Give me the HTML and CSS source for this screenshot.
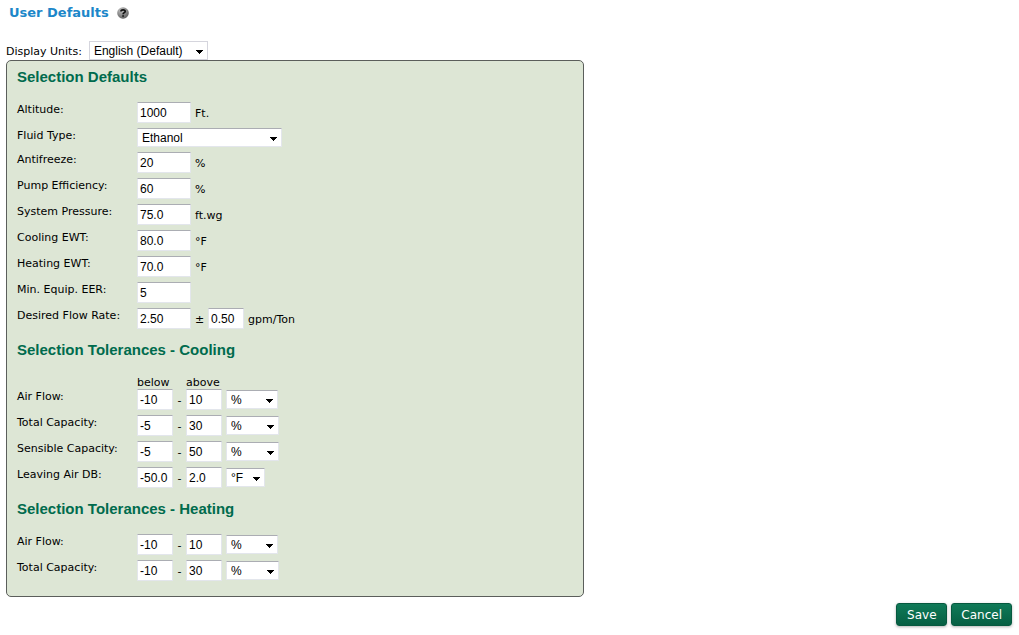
FILE: index.html
```html
<!DOCTYPE html>
<html lang="en">
<head>
<meta charset="utf-8">
<title>User Defaults</title>
<link rel="stylesheet" href="styles.css">
</head>
<body>
<header class="page-header">
  <h1 class="page-title">User Defaults</h1>
  <svg class="help-icon" viewBox="0 0 12 12" role="img" aria-label="Help">
    <defs><radialGradient id="ball" cx="35%" cy="25%" r="80%"><stop offset="0" stop-color="#c0c0c0"/><stop offset="1" stop-color="#5c5c5c"/></radialGradient></defs>
    <circle cx="6" cy="6" r="5.8" fill="url(#ball)"/>
    <path d="M4 4.4C4 2.5 8.2 2.3 8.2 4.4C8.2 5.7 6.1 5.6 6.1 7.2M6.1 8.3V9.8" fill="none" stroke="#111" stroke-width="1.7"/>
  </svg>
</header>
<form class="defaults-form">
  <div class="units-bar">
    <label for="units">Display Units:</label>
    <select id="units" class="select select-units"><option>English (Default)</option></select>
  </div>
  <div class="panel">
    <section class="group">
      <h2 class="group-title">Selection Defaults</h2>
      <div class="row"><label class="name" for="altitude">Altitude:</label><div class="fields"><input id="altitude" class="box" value="1000"><span>Ft.</span></div></div>
      <div class="row row-select"><label class="name" for="fluid">Fluid Type:</label><div class="fields"><select id="fluid" class="select select-fluid"><option>Ethanol</option></select></div></div>
      <div class="row"><label class="name" for="antifreeze">Antifreeze:</label><div class="fields"><input id="antifreeze" class="box" value="20"><span>%</span></div></div>
      <div class="row"><label class="name" for="pump">Pump Efficiency:</label><div class="fields"><input id="pump" class="box" value="60"><span>%</span></div></div>
      <div class="row"><label class="name" for="pressure">System Pressure:</label><div class="fields"><input id="pressure" class="box" value="75.0"><span>ft.wg</span></div></div>
      <div class="row"><label class="name" for="cool-ewt">Cooling EWT:</label><div class="fields"><input id="cool-ewt" class="box" value="80.0"><span>°F</span></div></div>
      <div class="row"><label class="name" for="heat-ewt">Heating EWT:</label><div class="fields"><input id="heat-ewt" class="box" value="70.0"><span>°F</span></div></div>
      <div class="row"><label class="name" for="eer">Min. Equip. EER:</label><div class="fields"><input id="eer" class="box" value="5"></div></div>
      <div class="row"><label class="name" for="flow">Desired Flow Rate:</label><div class="fields"><input id="flow" class="box" value="2.50"><span class="plus-minus">±</span><input class="box box-small" value="0.50" aria-label="Flow rate tolerance"><span>gpm/Ton</span></div></div>
    </section>
    <section class="group">
      <h2 class="group-title">Selection Tolerances - Cooling</h2>
      <div class="column-heads"><span>below</span><span>above</span></div>
      <div class="row"><label class="name" for="c-air">Air Flow:</label><div class="fields"><input id="c-air" class="box box-small" value="-10"><span class="dash">-</span><input class="box box-small" value="10" aria-label="Air flow above"><select class="select select-flow" aria-label="Air flow unit"><option>%</option></select></div></div>
      <div class="row"><label class="name" for="c-total">Total Capacity:</label><div class="fields"><input id="c-total" class="box box-small" value="-5"><span class="dash">-</span><input class="box box-small" value="30" aria-label="Total capacity above"><select class="select select-unit" aria-label="Total capacity unit"><option>%</option></select></div></div>
      <div class="row"><label class="name" for="c-sens">Sensible Capacity:</label><div class="fields"><input id="c-sens" class="box box-small" value="-5"><span class="dash">-</span><input class="box box-small" value="50" aria-label="Sensible capacity above"><select class="select select-unit" aria-label="Sensible capacity unit"><option>%</option></select></div></div>
      <div class="row"><label class="name" for="c-db">Leaving Air DB:</label><div class="fields"><input id="c-db" class="box box-small" value="-50.0"><span class="dash">-</span><input class="box box-small" value="2.0" aria-label="Leaving air above"><select class="select select-degree" aria-label="Leaving air unit"><option>°F</option></select></div></div>
    </section>
    <section class="group">
      <h2 class="group-title">Selection Tolerances - Heating</h2>
      <div class="row"><label class="name" for="h-air">Air Flow:</label><div class="fields"><input id="h-air" class="box box-small" value="-10"><span class="dash">-</span><input class="box box-small" value="10" aria-label="Heating air flow above"><select class="select select-flow" aria-label="Heating air flow unit"><option>%</option></select></div></div>
      <div class="row"><label class="name" for="h-total">Total Capacity:</label><div class="fields"><input id="h-total" class="box box-small" value="-10"><span class="dash">-</span><input class="box box-small" value="30" aria-label="Heating total capacity above"><select class="select select-unit" aria-label="Heating total capacity unit"><option>%</option></select></div></div>
    </section>
  </div>
  <div class="actions">
    <button type="submit" class="button">Save</button>
    <button type="button" class="button">Cancel</button>
  </div>
</form>
</body>
</html>
```

FILE: styles.css
```css
* { box-sizing: border-box; }
body {
  margin: 0;
  padding: 4px 7px 8px 6px;
  background: #fff;
  color: #000;
  font: 11px/16px Verdana, "DejaVu Sans", sans-serif;
}
.page-header {
  display: flex;
  align-items: center;
  gap: 8px;
  height: 18px;
  padding-left: 3px;
}
.page-title {
  margin: 0;
  color: #1c87c9;
  font-size: 13px;
  line-height: 18px;
}
.help-icon { width: 12px; height: 12px; }
.units-bar {
  display: flex;
  align-items: center;
  gap: 7px;
  margin-top: 19px;
}
.units-bar label { padding-top: 2px; }
.panel {
  max-width: 578px;
  padding: 0 10px 10px;
  border: 1px solid #5b5e5b;
  border-radius: 5px;
  background: #dde6d5;
}
.group { padding-top: 8px; }
.group-title {
  margin: 0 0 17px;
  color: #006b4d;
  font: bold 15px/16px "Liberation Sans", Arial, sans-serif;
}
.row {
  display: grid;
  grid-template-columns: 120px 1fr;
  align-items: start;
  height: 26px;
}
.row-select { height: 24px; }
.fields {
  display: flex;
  align-items: center;
  gap: 4px;
}
.fields span { padding-top: 2px; }
.plus-minus { width: 9px; text-align: center; }
.dash { width: 5px; text-align: center; }
.column-heads {
  display: grid;
  grid-template-columns: 44px 1fr;
  gap: 5px;
  height: 14px;
  padding-left: 120px;
}
.box, .select {
  margin: 0;
  border: 1px solid #e3e6ec;
  border-top-color: #abadb3;
  border-radius: 0;
  background-color: #fff;
  color: #000;
  font: 12px/16px "Liberation Sans", Arial, sans-serif;
}
.box {
  width: 54px;
  height: 21px;
  padding: 1px 2px;
}
.box-small { width: 36px; }
.select {
  height: 19px;
  padding: 0 4px;
  appearance: none;
  background-image:
    linear-gradient(#000, #000),
    linear-gradient(#000, #000),
    linear-gradient(#000, #000),
    linear-gradient(#000, #000);
  background-repeat: no-repeat;
  background-size: 7px 1px, 5px 1px, 3px 1px, 1px 1px;
  background-position: right 4px top 8px, right 5px top 9px, right 6px top 10px, right 7px top 11px;
}
.select-units { width: 119px; border-color: #d5d5dd; }
.select-fluid { width: 145px; }
.select-flow { width: 52px; }
.select-unit { width: 53px; }
.select-degree { width: 39px; }
.actions {
  display: flex;
  justify-content: flex-end;
  gap: 4px;
  margin-top: 6px;
}
.button {
  min-width: 51px;
  height: 23px;
  padding: 0 9px;
  border: 1px solid #06593f;
  border-radius: 3px;
  background: linear-gradient(#107a58, #065f43);
  box-shadow: 0 1px 3px rgba(0, 0, 0, 0.3);
  color: #fff;
  font: 12px/18px Verdana, "DejaVu Sans", sans-serif;
}
```
